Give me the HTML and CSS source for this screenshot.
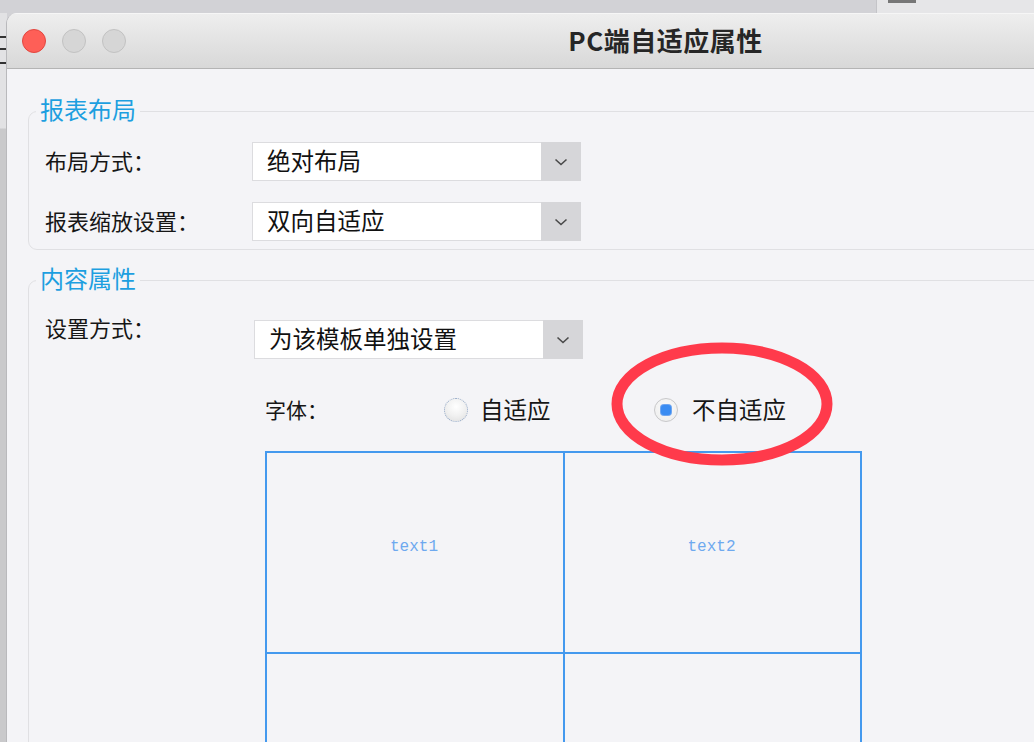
FILE: index.html
```html
<!DOCTYPE html>
<html lang="zh-CN">
<head>
<meta charset="utf-8">
<title>PC端自适应属性</title>
<link rel="stylesheet" href="styles.css">
</head>
<body>
<div class="desk">
  <div class="desk-panel"><span class="desk-bar"></span></div>
  <div class="desk-left">
    <span class="dl dl1"></span><span class="dl dl2"></span><span class="dl dl3"></span>
  </div>

  <div class="window">
    <div class="titlebar">
      <div class="lights">
        <span class="light red"></span>
        <span class="light"></span>
        <span class="light"></span>
      </div>
      <div class="title">PC端自适应属性</div>
      <div></div>
    </div>

    <div class="content">
      <fieldset class="group g1">
        <legend>报表布局</legend>
        <div class="rows">
          <div class="row">
            <div class="label">布局方式：</div>
            <div class="select"><span class="val">绝对布局</span><span class="arrow"><svg width="14" height="8" viewBox="0 0 14 8"><polyline points="1.5,1.5 7,6.5 12.5,1.5" fill="none" stroke="#4a4a4a" stroke-width="1.6"/></svg></span></div>
          </div>
          <div class="row">
            <div class="label">报表缩放设置：</div>
            <div class="select"><span class="val">双向自适应</span><span class="arrow"><svg width="14" height="8" viewBox="0 0 14 8"><polyline points="1.5,1.5 7,6.5 12.5,1.5" fill="none" stroke="#4a4a4a" stroke-width="1.6"/></svg></span></div>
          </div>
        </div>
      </fieldset>

      <fieldset class="group g2">
        <legend>内容属性</legend>
        <div class="rows rows2">
          <div class="row row-top">
            <div class="label label2">设置方式：</div>
            <div class="select"><span class="val">为该模板单独设置</span><span class="arrow"><svg width="14" height="8" viewBox="0 0 14 8"><polyline points="1.5,1.5 7,6.5 12.5,1.5" fill="none" stroke="#4a4a4a" stroke-width="1.6"/></svg></span></div>
          </div>
          <div class="radios">
            <div class="rlabel">字体：</div>
            <div class="opt"><span class="radio"></span><span class="otext">自适应</span></div>
            <div class="opt"><span class="radio checked"></span><span class="otext">不自适应</span></div>
          </div>
          <div class="cells">
            <div class="cell"><span>text1</span></div>
            <div class="cell"><span>text2</span></div>
            <div class="cell"></div>
            <div class="cell"></div>
          </div>
        </div>
      </fieldset>
    </div>
  </div>

  <svg class="mark" width="232" height="132" viewBox="0 0 232 132">
    <ellipse cx="116" cy="66" rx="105" ry="56" fill="none" stroke="#ff3a4b" stroke-width="11"/>
  </svg>
</div>
</body>
</html>
```

FILE: styles.css
```css
* { box-sizing: border-box; }

html, body {
  margin: 0;
  padding: 0;
}

body {
  width: 1034px;
  height: 742px;
  overflow: hidden;
  background: #d2d2d6;
  font-family: "Noto Sans CJK SC", "Noto Sans", sans-serif;
  color: #161616;
}

.desk {
  position: relative;
  width: 1034px;
  height: 742px;
  overflow: hidden;
}

.desk-panel {
  position: absolute;
  left: 876px;
  top: 0;
  width: 200px;
  height: 14px;
  background: #e6e6e8;
  border-left: 1px solid #c4c4c8;
}

.desk-bar {
  position: absolute;
  left: 11px;
  top: 0;
  width: 28px;
  height: 3px;
  background: #777;
}

.desk-left {
  position: absolute;
  left: 0;
  top: 13px;
  width: 7px;
  height: 729px;
  background: linear-gradient(#e2e2e4 0, #e2e2e4 115px, #c9c9cb 116px, #c9c9cb 100%);
}

.dl {
  position: absolute;
  left: 0;
  width: 6px;
  height: 2px;
  background: #333;
}
.dl1 { top: 23px; }
.dl2 { top: 35px; }
.dl3 { top: 49px; }

.window {
  position: absolute;
  left: 6px;
  top: 13px;
  width: 1318px;
  height: 800px;
  background: #f4f4f7;
  border-left: 1px solid #b9b9bc;
  border-top-left-radius: 11px;
  overflow: hidden;
}

.titlebar {
  height: 56px;
  display: grid;
  grid-template-columns: 1fr auto 1fr;
  align-items: center;
  background: linear-gradient(#eeeeee, #d8d8d8);
  border-bottom: 1px solid #b4b4b4;
  border-top: 1px solid #f6f6f6;
}

.lights {
  display: flex;
  gap: 16px;
  padding-left: 15px;
}

.light {
  width: 24px;
  height: 24px;
  border-radius: 50%;
  background: #d6d6d6;
  border: 1px solid #c2c2c2;
}

.light.red {
  background: #fe5f57;
  border-color: #e2463f;
}

.title {
  font-size: 26px;
  font-weight: 700;
  color: #262626;
  letter-spacing: 0.5px;
  line-height: 30px;
  padding-bottom: 2px;
}

.content {
  padding-top: 28px;
}

.group {
  margin: 0 0 0 21px;
  padding: 0;
  min-width: 0;
  border: 1px solid #e0e0e3;
  border-radius: 9px;
}

.group legend {
  margin-left: 7px;
  padding: 0 4px 4px;
  font-size: 24px;
  line-height: 24px;
  color: #1d9fe0;
}

.g2 {
  margin-top: 16px;
  height: 700px;
}

.rows {
  padding: 17px 0 8px 16px;
  display: flex;
  flex-direction: column;
  gap: 21px;
}

.rows2 {
  padding-top: 26px;
  gap: 0;
}

.row {
  display: flex;
  align-items: center;
}

.row-top {
  align-items: flex-start;
}

.label {
  width: 207px;
  font-size: 22px;
  line-height: 26px;
  padding-bottom: 3px;
  color: #161616;
}

.label2 {
  width: 209px;
  line-height: 20px;
  padding-bottom: 0;
  margin-top: -3px;
}

.select {
  width: 329px;
  height: 39px;
  display: flex;
  background: #fff;
  border: 1px solid #dcdcdf;
}

.val {
  flex: 1;
  padding-left: 14px;
  font-size: 23.5px;
  line-height: 35px;
  color: #111;
}

.arrow {
  width: 40px;
  margin: -1px -1px -1px 0;
  background: #d6d6d9;
  display: flex;
  align-items: center;
  justify-content: center;
}

.radios {
  margin: 37px 0 0 220px;
  height: 28px;
  display: flex;
  align-items: center;
}

.rlabel {
  width: 179px;
  font-size: 21px;
  line-height: 26px;
  padding-bottom: 2px;
}

.opt {
  width: 212px;
  display: flex;
  align-items: center;
  gap: 12px;
}

.otext {
  font-size: 23.5px;
  line-height: 26px;
  padding-bottom: 2px;
}

.radio {
  width: 24px;
  height: 24px;
  border-radius: 50%;
  border: 1.5px dotted #93a9c9;
  background: radial-gradient(circle at 50% 35%, #ffffff 0, #f1f1f1 50%, #dedede 100%);
  display: flex;
  align-items: center;
  justify-content: center;
}

.radio.checked {
  border: 1.5px solid #c8c8ca;
  background: radial-gradient(circle at 50% 40%, #fafafa 0, #ececec 100%);
  margin-left: -2px;
  margin-right: 2px;
}

.radio.checked::after {
  content: "";
  width: 10px;
  height: 10px;
  border-radius: 3px;
  background: #3a8cf2;
  box-shadow: 0 0 0 1px #6fa6f0;
}

.cells {
  margin: 27px 0 0 220px;
  width: 597px;
  display: grid;
  grid-template-columns: 296px 295px;
  grid-template-rows: 199px 199px;
  gap: 2px;
  padding: 2px;
  background: #4499ee;
}

.cell {
  background: #f4f4f7;
  display: flex;
  align-items: center;
  justify-content: center;
  padding-bottom: 12px;
  padding-right: 2px;
  font-family: "Liberation Mono", monospace;
  font-size: 16px;
  color: #6ea9ef;
}

.mark {
  position: absolute;
  left: 606px;
  top: 338px;
}
```
